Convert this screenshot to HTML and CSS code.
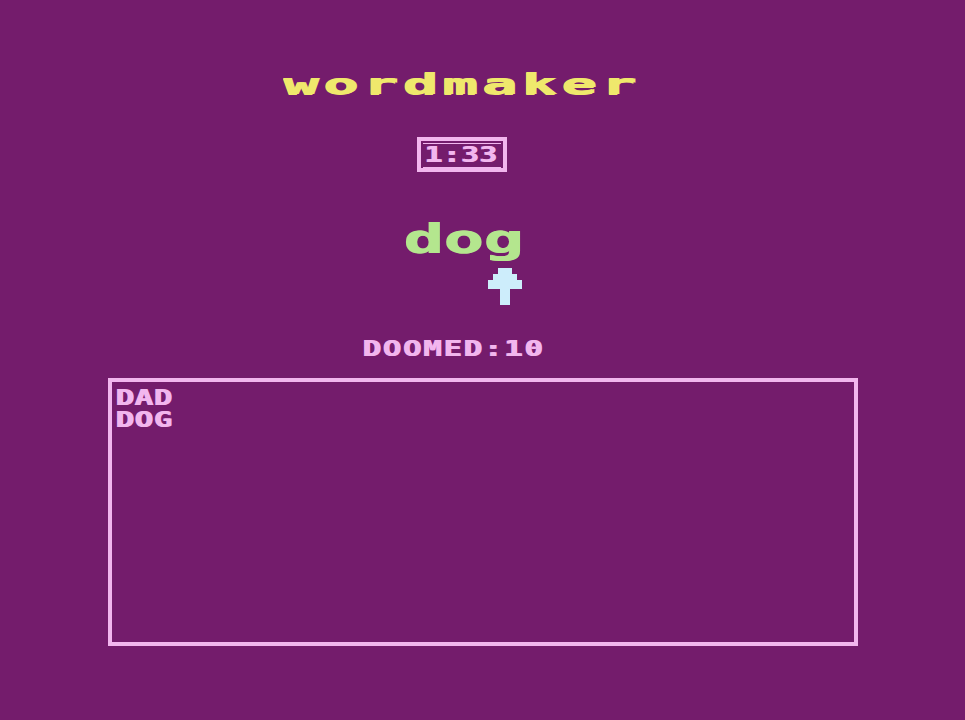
FILE: index.html
```html
<!DOCTYPE html>
<html lang="en">
<head>
<meta charset="utf-8">
<title>wordmaker</title>
<link rel="stylesheet" href="styles.css">
</head>
<body>
<main class="screen">
  <h1 class="title"><span class="wide2">wordmaker</span></h1>
  <div class="timer-row">
    <div class="timer"><div class="timer-inner"><span class="wide">1:33</span></div></div>
  </div>
  <div class="word"><span class="big">dog</span></div>
  <div class="cursor-row">
    <svg class="cursor" width="34" height="37" viewBox="0 0 34 37" aria-hidden="true">
      <polygon fill="#cdedfb" points="10,0 24,0 24,6 29,6 29,12 34,12 34,21 22,21 22,37 12,37 12,21 0,21 0,12 5,12 5,6 10,6"/>
    </svg>
  </div>
  <div class="doomed"><span class="wide">DOOMED:10</span></div>
  <section class="words">
    <div class="word-line"><span class="wide">DAD</span></div>
    <div class="word-line"><span class="wide">DOG</span></div>
  </section>
</main>
</body>
</html>
```
FILE: styles.css
```css
html, body {
  margin: 0;
  padding: 0;
  background: #741c6c;
  height: 100%;
}
body {
  font-family: "DejaVu Sans Mono", "Liberation Mono", monospace;
  font-weight: bold;
  color: #f2b6ee;
}
.screen {
  width: 800px;
  margin: 0 auto;
  padding-top: 67px;
  display: flex;
  flex-direction: column;
}
.title {
  margin: 0;
  padding-left: 200px;
  height: 34px;
  font-size: 29px;
  line-height: 34px;
  font-weight: bold;
  color: #efe86c;
}
.wide2 {
  display: inline-block;
  transform: scaleX(2);
  transform-origin: left center;
  letter-spacing: 2.4px;
  text-shadow: 1px 0 0 #efe86c, 0 1px 0 #efe86c;
}
.wide {
  display: inline-block;
  transform: scaleX(1.4);
  transform-origin: left center;
  letter-spacing: 0.4px;
  text-shadow: 1px 0 0 currentColor;
}
.timer-row {
  margin-top: 36px;
  padding-left: 334px;
  height: 35px;
}
.timer {
  box-sizing: border-box;
  width: 90px;
  height: 35px;
  border: solid #f2b6ee;
  border-width: 4px 4px;
  padding: 2px 2px;
}
.timer-inner {
  height: 23px;
  border-top: 1px solid #f2b6ee;
  border-bottom: 1px solid #f2b6ee;
  font-size: 21px;
  line-height: 23px;
  padding-left: 1px;
}
.word {
  margin-top: 44px;
  padding-left: 320px;
  height: 46px;
  font-size: 40px;
  line-height: 46px;
  color: #b4e68e;
}
.big {
  display: inline-block;
  transform: scaleX(1.66);
  transform-origin: left center;
  text-shadow: 1px 0 0 #b4e68e;
}
.cursor-row {
  padding-left: 405px;
  height: 44px;
}
.cursor {
  display: block;
  margin-top: 6px;
}
.doomed {
  margin-top: 31px;
  padding-left: 279px;
  height: 24px;
  font-size: 22px;
  line-height: 24px;
}
.doomed .wide {
  letter-spacing: 1.2px;
}
.words {
  margin-top: 17px;
  margin-left: 25px;
  width: 750px;
  height: 268px;
  box-sizing: border-box;
  border: 4px solid #f2b6ee;
  padding: 5px 0 0 3px;
  font-size: 22px;
  line-height: 22px;
}
.word-line {
  height: 22px;
}
```
